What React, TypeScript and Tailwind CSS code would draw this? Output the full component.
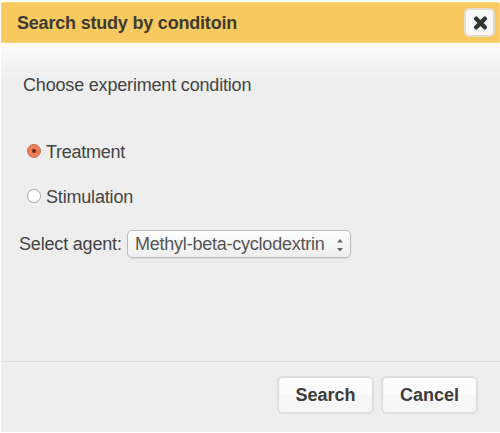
export default function App() {
  return (
    <div className="flex h-[433px] w-[500px] flex-col bg-white pt-[2px] pb-[1px] pl-px font-['Liberation_Sans',Arial,sans-serif] text-[18px] leading-[20px] tracking-[-0.18px] text-[#444]">
      <header className="flex h-[41px] shrink-0 items-center justify-between rounded-t-[2px] border border-[#f8d27c] bg-[#f8c95e] pr-[4px] pl-[15px]">
        <h1 className="text-[18px] font-bold tracking-[-0.2px] whitespace-nowrap text-[#3e3b34]">Search study by conditoin</h1>
        <button aria-label="Close" className="flex h-[29px] w-[31px] items-center justify-center rounded-[5px] border-2 border-[#e3dccb] bg-[#f8f8f8] pt-px pl-[2px]">
          <svg width="15" height="14" viewBox="0 0 15 14" fill="none" stroke="#333" strokeWidth="4.4"><path strokeLinecap="round" d="m3.2 2.7 8.6 8.6m0-8.6-8.6 8.6" /></svg>
        </button>
      </header>
      <main className="flex h-[318px] shrink-0 flex-col items-start bg-linear-to-b from-[#fbfbfb] to-[#eee] to-[38px] pt-[32px] pl-[18px]">
        <p className="pl-[4px]">Choose experiment condition</p>
        <label className="mt-[47px] flex items-center gap-[5px] pl-[8px] tracking-[-0.25px]">
          <span className="mb-[3px] flex size-[14px] items-center justify-center rounded-full border border-[#b9745f] bg-[#f07c52]"><span className="size-[4px] rounded-full bg-[#61291a]" /></span>
          Treatment
        </label>
        <label className="mt-[25px] flex items-center gap-[5px] pl-[8px]">
          <span className="mb-[3px] size-[14px] rounded-full border border-[#aaa] bg-white" />
          Stimulation
        </label>
        <div className="mt-[23px] flex items-center gap-[5px]">
          <span className="w-[103px] whitespace-nowrap">Select agent:</span>
          <button className="flex h-[28px] w-[224px] items-center justify-between rounded-[5px] border border-[#bbb] bg-linear-to-b from-white to-[#eee] pr-[6px] pl-[7px] tracking-[-0.23px] text-[#555] shadow-[0_1px_1px_#ddd]">
            <span className="whitespace-nowrap">Methyl-beta-cyclodextrin</span>
            <svg width="8" height="18" viewBox="0 0 8 18" fill="#666"><path d="M1 7.5 4 4l3 3.5zM1 13l3 3.5L7 13z" /></svg>
          </button>
        </div>
      </main>
      <footer className="flex flex-1 items-start justify-end gap-[7px] border-t border-[#dfdfdf] bg-[#eee] pt-[14px] pr-[22px] text-[18px] tracking-normal text-[#3c3c3c]">
        <button className="h-[38px] w-[97px] rounded-[6px] border-2 border-[#dedede] bg-linear-to-b from-[#fcfcfc] from-50% to-[#f6f6f6] to-50% pb-px font-bold">Search</button>
        <button className="h-[38px] w-[97px] rounded-[6px] border-2 border-[#dedede] bg-linear-to-b from-[#fcfcfc] from-50% to-[#f6f6f6] to-50% pb-px font-bold">Cancel</button>
      </footer>
    </div>
  );
}
